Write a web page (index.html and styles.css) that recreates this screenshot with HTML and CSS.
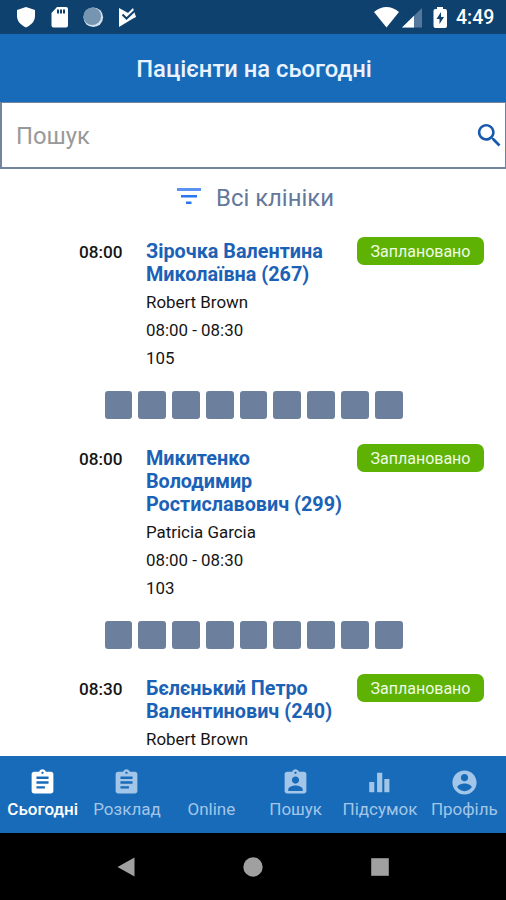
FILE: index.html
```html
<!DOCTYPE html>
<html lang="uk">
<head>
<meta charset="utf-8">
<title>Пацієнти на сьогодні</title>
<link rel="stylesheet" href="styles.css">
</head>
<body>
<div class="screen">
  <div class="status">
    <svg class="status-left" width="140" height="34" viewBox="0 0 140 34">
      <path fill="#fff" d="M26 7l9 3v6c0 5-3.500 9-9 11.500C20.500 25 17 21 17 16v-6z"/>
      <path fill="#fff" d="M57 7h9q2 0 2 2v16.500q0 2-2 2H53.500q-2 0-2-2V13z"/>
      <path fill="#0f416f" d="M57 9.500h2v4h-2zM60 9.500h2v4h-2zM63 9.500h2v4h-2z"/>
      <circle cx="93.300" cy="17.300" r="9.800" fill="#d5e2ed"/>
      <circle cx="92.300" cy="16.300" r="8.800" fill="#7695b1"/>
      <path fill="#fff" d="M119 8l16.500 9L119 27z"/>
      <path fill="#fff" d="M127 14l6-6 3 9-9 3z"/>
      <path fill="none" stroke="#0f416f" stroke-width="2" d="M122.500 14.500l4 4 9-8.500"/>
      <path fill="#0f416f" d="M123 8l4 3.500 4-4.500z"/>
    </svg>
    <svg class="status-right" width="80" height="34" viewBox="370 0 80 34">
      <path fill="#fff" d="M374 12q12.500-10 25 0L386.500 27.500z"/>
      <path fill="#54789b" d="M422 8v19.500h-20z"/>
      <path fill="#fff" d="M414 15.800v11.700h-12z"/>
      <path fill="#fff" d="M437 7h6v2h2q2 0 2 2v15q0 2-2 2h-9.500q-2 0-2-2V11q0-2 2-2h1.500z"/>
      <path fill="#0f416f" d="M441 12l-4.500 7h3v5l4.500-7h-3z"/>
    </svg>
    <span class="clock">4:49</span>
  </div>
  <header class="header"><h1 class="title">Пацієнти на сьогодні</h1></header>
  <div class="search">
    <span class="placeholder">Пошук</span>
    <svg class="search-icon" viewBox="0 0 24 24"><path d="M15.500 14h-.79l-.28-.27C15.410 12.590 16 11.110 16 9.500 16 5.910 13.090 3 9.500 3S3 5.910 3 9.500 5.910 16 9.500 16c1.610 0 3.090-.59 4.230-1.570l.27.28v.79l5 4.990L20.490 19l-4.990-5zm-6 0C7.010 14 5 11.990 5 9.500S7.010 5 9.500 5 14 7.010 14 9.500 11.990 14 9.500 14z"/></svg>
  </div>
  <main class="content">
    <div class="filter">
      <svg class="filter-icon" viewBox="0 0 24 17"><path fill="#5b93f5" d="M0 0h24v3H0z"/><path fill="#2877ee" d="M4 7h16v2.500H4zM9 13.500h5.500V16H9z"/></svg>
      <span class="filter-label">Всі клініки</span>
    </div>
    <article class="visit">
      <div class="info">
        <div class="time">08:00</div>
        <div class="details">
          <h2 class="name">Зірочка Валентина<br>Миколаївна (267)</h2>
          <p class="line">Robert Brown</p><p class="line">08:00 - 08:30</p><p class="line">105</p>
        </div>
        <span class="badge">Заплановано</span>
      </div>
      <div class="boxes"><i></i><i></i><i></i><i></i><i></i><i></i><i></i><i></i><i></i></div>
    </article>
    <article class="visit">
      <div class="info">
        <div class="time">08:00</div>
        <div class="details">
          <h2 class="name">Микитенко<br>Володимир<br>Ростиславович (299)</h2>
          <p class="line">Patricia Garcia</p><p class="line">08:00 - 08:30</p><p class="line">103</p>
        </div>
        <span class="badge">Заплановано</span>
      </div>
      <div class="boxes"><i></i><i></i><i></i><i></i><i></i><i></i><i></i><i></i><i></i></div>
    </article>
    <article class="visit">
      <div class="info">
        <div class="time">08:30</div>
        <div class="details">
          <h2 class="name">Бєлєнький Петро<br>Валентинович (240)</h2>
          <p class="line">Robert Brown</p>
        </div>
        <span class="badge">Заплановано</span>
      </div>
    </article>
  </main>
  <nav class="tabs">
    <div class="tab active">
      <svg class="tab-icon" viewBox="0 0 24 24"><path d="M19 3h-4.180C14.400 1.840 13.300 1 12 1c-1.300 0-2.400.84-2.820 2H5c-1.100 0-2 .9-2 2v14c0 1.100.9 2 2 2h14c1.100 0 2-.9 2-2V5c0-1.100-.9-2-2-2zm-7 0c.55 0 1 .45 1 1s-.45 1-1 1-1-.45-1-1 .45-1 1-1zm2 14H7v-2h7v2zm3-4H7v-2h10v2zm0-4H7V7h10v2z"/></svg>
      <span>Сьогодні</span>
    </div>
    <div class="tab">
      <svg class="tab-icon" viewBox="0 0 24 24"><path d="M19 3h-4.180C14.400 1.840 13.300 1 12 1c-1.300 0-2.400.84-2.820 2H5c-1.100 0-2 .9-2 2v14c0 1.100.9 2 2 2h14c1.100 0 2-.9 2-2V5c0-1.100-.9-2-2-2zm-7 0c.55 0 1 .45 1 1s-.45 1-1 1-1-.45-1-1 .45-1 1-1zm2 14H7v-2h7v2zm3-4H7v-2h10v2zm0-4H7V7h10v2z"/></svg>
      <span>Розклад</span>
    </div>
    <div class="tab">
      <div class="tab-icon"></div>
      <span>Online</span>
    </div>
    <div class="tab">
      <svg class="tab-icon" viewBox="0 0 24 24"><path d="M19 3h-4.180C14.400 1.840 13.300 1 12 1c-1.300 0-2.400.84-2.820 2H5c-1.100 0-2 .9-2 2v14c0 1.100.9 2 2 2h14c1.100 0 2-.9 2-2V5c0-1.100-.9-2-2-2zm-7 0c.55 0 1 .45 1 1s-.45 1-1 1-1-.45-1-1 .45-1 1-1zm0 4c1.660 0 3 1.340 3 3s-1.340 3-3 3-3-1.340-3-3 1.340-3 3-3zm6 12H6v-1.400c0-2 4-3.100 6-3.100s6 1.100 6 3.100V19z"/></svg>
      <span>Пошук</span>
    </div>
    <div class="tab">
      <svg class="tab-icon" viewBox="0 0 24 24"><path d="M3.500 11.500h4.200V20H3.500zM10 4h4.300v16H10zM16 9h4.200v11H16z"/></svg>
      <span>Підсумок</span>
    </div>
    <div class="tab">
      <svg class="tab-icon" viewBox="0 0 24 24"><path d="M12 2C6.480 2 2 6.480 2 12s4.480 10 10 10 10-4.480 10-10S17.520 2 12 2zm0 3c1.660 0 3 1.340 3 3s-1.340 3-3 3-3-1.340-3-3 1.340-3 3-3zm0 14.200c-2.500 0-4.710-1.280-6-3.220.03-1.990 4-3.080 6-3.080 1.990 0 5.970 1.090 6 3.080-1.290 1.940-3.500 3.220-6 3.220z"/></svg>
      <span>Профіль</span>
    </div>
  </nav>
  <div class="system">
    <svg viewBox="0 0 20 20"><path d="M18.500.5v19L1.500 10z"/></svg>
    <svg viewBox="0 0 20 20"><circle cx="10" cy="10" r="9.700"/></svg>
    <svg viewBox="0 0 20 20"><rect x="1.200" y="1.200" width="17.600" height="17.600"/></svg>
  </div>
</div>
</body>
</html>
```
FILE: styles.css
```css
* { box-sizing: border-box; margin: 0; padding: 0; }
body { font-family: Roboto, "Liberation Sans", sans-serif; background: #fff; color: #151515; }
.screen { width: 506px; height: 900px; display: flex; flex-direction: column; overflow: hidden; }
svg { display: block; flex: none; }
.status { height: 34px; background: #0f416f; display: flex; align-items: center; flex: none; }
.status-right { margin-left: 230px; }
.clock { margin-left: 6px; color: #fff; font-size: 19.500px; font-weight: 500; line-height: 34px; padding-top: 2px; }
.header { height: 68px; background: #176bb9; display: flex; align-items: center; justify-content: center; flex: none; }
.title { color: #eaf3ff; font-size: 23.800px; font-weight: 500; padding: 2px 0 0 2px; white-space: nowrap; }
.search { height: 67px; border: 2px solid #73849f; border-width: 1px 1px 2px 2px; display: flex; align-items: center; justify-content: space-between; padding: 1px 0 0 14px; flex: none; }
.placeholder { color: #999; font-size: 23.800px; padding-top: 1px; }
.search-icon { width: 31px; height: 31px; fill: #1759ad; }
.content { flex: 1; min-height: 0; overflow: hidden; }
.filter { height: 68px; padding: 14px 0 0 177px; display: flex; align-items: flex-start; }
.filter-icon { width: 24px; height: 17px; margin-top: 5px; }
.filter-label { margin-left: 15px; font-size: 23.900px; line-height: 30px; color: #64789b; white-space: nowrap; }
.info { display: flex; padding-left: 79px; align-items: flex-start; }
.time { width: 67px; font-size: 17.200px; font-weight: 500; line-height: 28px; padding-top: 1px; }
.details { width: 211px; padding-top: 3px; white-space: nowrap; }
.name { font-size: 19.800px; line-height: 23px; font-weight: 700; color: #1b61b6; margin-bottom: 2px; }
.line { font-size: 16.900px; line-height: 28px; }
.badge { width: 127px; height: 28px; border-radius: 7px; background: #5eb204; color: #effbe5; font-size: 16px; line-height: 29px; text-align: center; }
.boxes { display: flex; gap: 6px; padding: 19px 0 25.500px 104.500px; }
.boxes i { width: 27.800px; height: 27.500px; border-radius: 3px; background: #6c809d; }
.tabs { height: 77px; background: #176bb9; display: grid; grid-template-columns: repeat(6, 1fr); flex: none; }
.tab { display: flex; flex-direction: column; align-items: center; padding: 12px 0 0 1px; color: #a3c6e8; font-size: 17px; line-height: 24px; white-space: nowrap; }
.tab.active { color: #fff; font-weight: 500; }
.tab-icon { width: 29px; height: 29px; fill: currentColor; }
.system { height: 67px; background: #000; display: flex; align-items: center; justify-content: space-between; padding: 0 116px; flex: none; }
.system svg { width: 20px; height: 20px; fill: #a0a0a0; }
```
